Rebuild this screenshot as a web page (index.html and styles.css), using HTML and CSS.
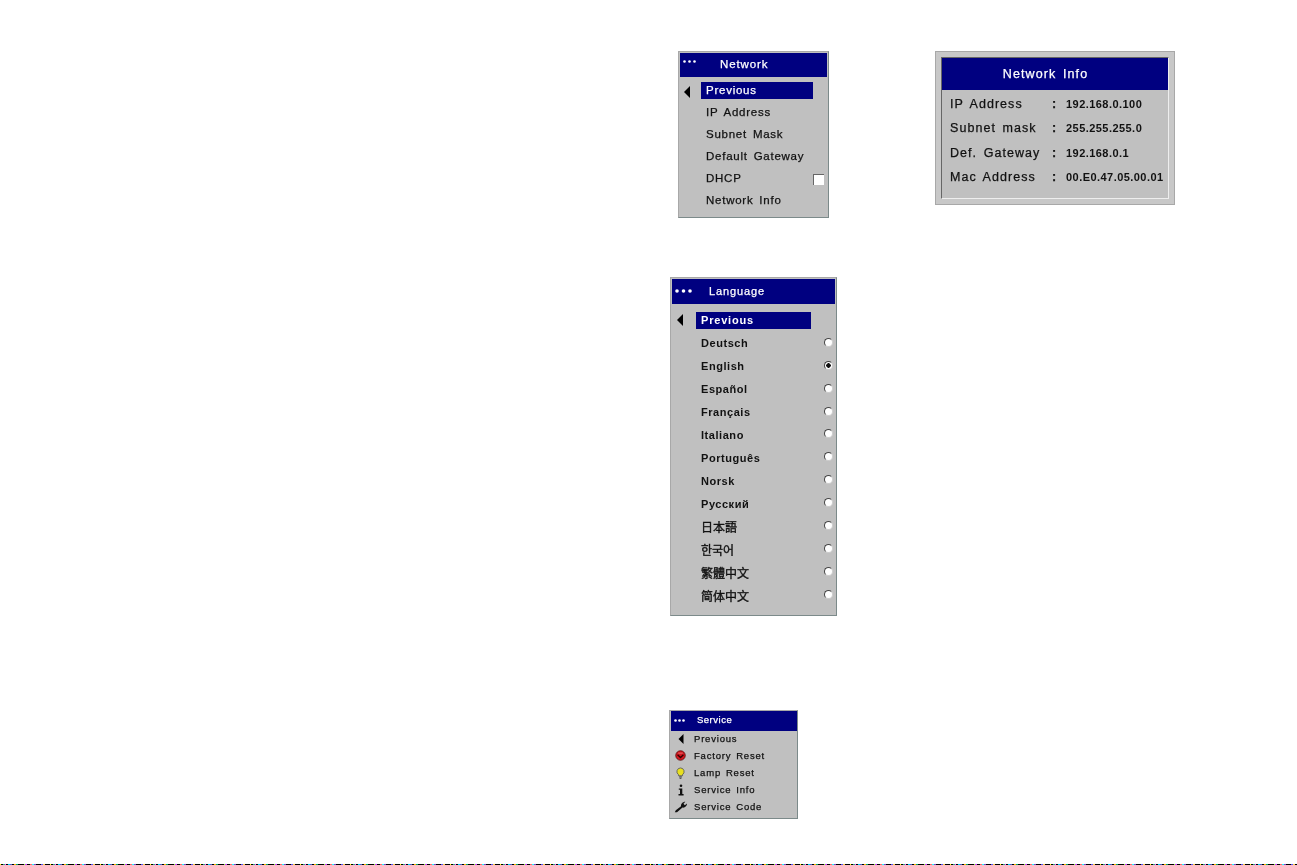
FILE: index.html
```html
<!DOCTYPE html>
<html lang="en">
<head>
<meta charset="utf-8">
<title>Projector menus</title>
<link rel="stylesheet" href="styles.css">
</head>
<body>
<main class="page">
  <section class="osd network">
    <header class="title">
      <svg class="dots" viewBox="0 0 13 3"><circle cx="1.5" cy="1.5" r="1.3"/><circle cx="6.5" cy="1.5" r="1.3"/><circle cx="11.5" cy="1.5" r="1.3"/></svg>
      <span class="title-text">Network</span>
    </header>
    <ul class="menu">
      <li class="row current"><svg class="back" viewBox="0 0 6 12"><path d="M6 0V12L0 6Z"/></svg><span class="label">Previous</span></li>
      <li class="row"><span class="label">IP Address</span></li>
      <li class="row"><span class="label">Subnet Mask</span></li>
      <li class="row"><span class="label">Default Gateway</span></li>
      <li class="row"><span class="label">DHCP</span><i class="check"></i></li>
      <li class="row"><span class="label">Network Info</span></li>
    </ul>
  </section>

  <section class="osd info">
    <div class="info-inner">
      <header class="title">Network Info</header>
      <dl class="info-grid">
        <dt>IP Address</dt><dd class="colon">:</dd><dd class="value">192.168.0.100</dd>
        <dt>Subnet mask</dt><dd class="colon">:</dd><dd class="value">255.255.255.0</dd>
        <dt>Def. Gateway</dt><dd class="colon">:</dd><dd class="value">192.168.0.1</dd>
        <dt>Mac Address</dt><dd class="colon">:</dd><dd class="value">00.E0.47.05.00.01</dd>
      </dl>
    </div>
  </section>

  <section class="osd language">
    <header class="title">
      <svg class="dots" viewBox="0 0 17 4"><circle cx="2" cy="2" r="1.8"/><circle cx="8.5" cy="2" r="1.8"/><circle cx="15" cy="2" r="1.8"/></svg>
      <span class="title-text">Language</span>
    </header>
    <ul class="menu">
      <li class="row current"><svg class="back" viewBox="0 0 6 12"><path d="M6 0V12L0 6Z"/></svg><span class="label">Previous</span></li>
      <li class="row"><span class="label">Deutsch</span><i class="radio"></i></li>
      <li class="row"><span class="label">English</span><i class="radio on"></i></li>
      <li class="row"><span class="label">Español</span><i class="radio"></i></li>
      <li class="row"><span class="label">Français</span><i class="radio"></i></li>
      <li class="row"><span class="label">Italiano</span><i class="radio"></i></li>
      <li class="row"><span class="label">Português</span><i class="radio"></i></li>
      <li class="row"><span class="label">Norsk</span><i class="radio"></i></li>
      <li class="row"><span class="label">Русский</span><i class="radio"></i></li>
      <li class="row"><span class="label cjk" lang="ja">日本語</span><i class="radio"></i></li>
      <li class="row"><span class="label cjk" lang="ko">한국어</span><i class="radio"></i></li>
      <li class="row"><span class="label cjk" lang="zh-Hant">繁體中文</span><i class="radio"></i></li>
      <li class="row"><span class="label cjk" lang="zh-Hans">简体中文</span><i class="radio"></i></li>
    </ul>
  </section>

  <section class="osd service">
    <header class="title">
      <svg class="dots" viewBox="0 0 11 3"><circle cx="1.5" cy="1.5" r="1.3"/><circle cx="5.5" cy="1.5" r="1.3"/><circle cx="9.5" cy="1.5" r="1.3"/></svg>
      <span class="title-text">Service</span>
    </header>
    <ul class="menu">
      <li class="row"><span class="ico"><svg class="back" viewBox="0 0 6 12"><path d="M6 0V12L0 6Z"/></svg></span><span class="label">Previous</span></li>
      <li class="row"><span class="ico"><svg viewBox="0 0 12 12" width="11" height="11"><circle cx="6" cy="6" r="5.200" fill="#d01820" stroke="#500" stroke-width="0.800"/><path d="M2.800 5.200L6 8.200L9.200 5.200" fill="none" stroke="#300" stroke-width="1.500"/><path d="M3.500 3.400H8.500" stroke="#f07070" stroke-width="1"/></svg></span><span class="label">Factory Reset</span></li>
      <li class="row"><span class="ico"><svg viewBox="0 0 12 13" width="11" height="12"><path d="M6 1A4 4 0 0 1 8.200 8.300V9.500H3.800V8.300A4 4 0 0 1 6 1Z" fill="#e8e020" stroke="#555" stroke-width="0.900"/><path d="M4.500 10.800H7.500M5 12.300H7" stroke="#333" stroke-width="1"/></svg></span><span class="label">Lamp Reset</span></li>
      <li class="row"><span class="ico"><svg viewBox="0 0 12 12" width="12" height="12"><circle cx="6" cy="1.800" r="1.300" fill="#111"/><path d="M3.800 4.500H7.300V10H8.600V11.500H3.500V10H5V5.800H3.800Z" fill="#111"/></svg></span><span class="label">Service Info</span></li>
      <li class="row"><span class="ico"><svg viewBox="0 0 14 12" width="14" height="12"><path d="M0.800 11.300L1.800 9.300L7 5.300C6.800 3 8.500 0.800 11.300 0.800L9.500 2.800L10.800 4.300L13 2.600C13.200 5 11 7 8.500 6.600L3 11.300Z" fill="#111"/></svg></span><span class="label">Service Code</span></li>
    </ul>
  </section>

  <div class="noise"></div>
</main>
</body>
</html>
```

FILE: styles.css
```css
* { box-sizing: border-box; }
html, body { margin: 0; padding: 0; background: #fff; }
.page {
  position: relative;
  width: 1297px;
  height: 865px;
  overflow: hidden;
  font-family: "Liberation Sans", "Noto Sans CJK JP", sans-serif;
  color: #111;
}
.osd {
  position: absolute;
  background: #c0c0c0;
  border: 1px solid #7c8a8a;
  border-top-color: #a8a8a8;
  border-left-color: #a8a8a8;
  filter: blur(0.4px);
  -webkit-text-stroke: 0.25px currentColor;
}
ul.menu { list-style: none; margin: 0; padding: 0; }
.title {
  display: flex;
  align-items: center;
  background: #000080;
  color: #fff;
  position: relative;
}
.dots { fill: #fff; display: block; }
.row { display: flex; align-items: center; position: relative; }
.back { fill: #000; display: block; }
.label { display: block; white-space: pre; }

/* Network */
.network { left: 678px; top: 51px; width: 151px; height: 167px; padding: 1px; }
.network .title { height: 24px; padding-bottom: 3px; font-size: 11.500px; letter-spacing: 0.900px; word-spacing: 2px; padding-left: 3px; }
.network .dots { width: 13px; height: 3px; margin-top: -5px; }
.network .title-text { margin-left: 24px; }
.network .menu { padding-top: 3px; }
.network .row { height: 21.900px; padding-left: 4px; font-size: 11.500px; letter-spacing: 0.750px; word-spacing: 2px; }
.network .back { width: 6px; height: 12px; margin-top: 2px; margin-right: 11px; }
.network .label { margin-left: 22px; line-height: 17px; }
.network .current .label { margin-left: 0; padding-left: 5px; width: 112px; background: #000080; color: #fff; }
.check {
  position: absolute; left: 133px; top: 6px; width: 11px; height: 11px;
  background: #fff; border-top: 1px solid #666; border-left: 1px solid #666;
}

/* Network info */
.info { left: 935px; top: 51px; width: 240px; height: 154px; padding: 5px; background: #c8c8c8; border: 1px solid #a8a8a8; }
.info-inner { height: 100%; background: #c0c0c0; border: 1px solid; border-color: #666 #eee #eee #666; }
.info .title { justify-content: center; height: 32px; font-size: 12.500px; letter-spacing: 1.100px; word-spacing: 2px; padding-right: 19px; }
.info-grid {
  display: grid;
  grid-template-columns: 102px 14px 1fr;
  grid-auto-rows: 24.300px;
  align-items: center;
  margin: 2px 0 0; padding-left: 8px;
  font-size: 12.500px; letter-spacing: 1.050px; word-spacing: 2px;
}
.info-grid dd { margin: 0; }
.info-grid .value { font-size: 11px; font-weight: 700; letter-spacing: 0.450px; -webkit-text-stroke: 0; }
.info-grid .colon { font-weight: 700; }

/* Language */
.language { left: 670px; top: 277px; width: 167px; height: 339px; padding: 1px; }
.language .title { height: 25px; padding-bottom: 2px; font-size: 11px; letter-spacing: 0.900px; padding-left: 3px; }
.language .dots { width: 17px; height: 4px; }
.language .title-text { margin-left: 17px; }
.language .menu { padding-top: 5px; }
.language .row { height: 22.900px; padding-left: 5px; font-size: 11px; font-weight: 700; letter-spacing: 0.550px; -webkit-text-stroke: 0; }
.language .row .label { margin-left: 24px; }
.language .current .back { width: 6px; height: 12px; margin-right: 13px; }
.language .row.current .label { margin-left: 0; width: 115px; padding-left: 5px; background: #000080; color: #fff; line-height: 17px; letter-spacing: 0.800px; }
.language .row .cjk { font-size: 12px; font-weight: 400; letter-spacing: 0; -webkit-text-stroke: 0.350px currentColor; }
.radio {
  position: absolute; left: 152px; top: 6px; width: 9px; height: 9px; border-radius: 50%;
  background: #fff; border: 1px solid; border-color: #444 #ccc #ccc #444;
}
.radio.on { background: radial-gradient(circle, #111 0 2px, #fff 2.500px); }

/* Service */
.service { left: 669px; top: 710px; width: 129px; height: 109px; padding: 0 0 0 1px; }
.service .title { height: 20px; padding-bottom: 3px; font-size: 9.500px; letter-spacing: 0.500px; padding-left: 3px; }
.service .dots { width: 11px; height: 3px; margin-top: 1px; }
.service .title-text { margin-left: 12px; }
.service .row { height: 17px; top: -1px; font-size: 9.500px; letter-spacing: 0.800px; word-spacing: 1.500px; }
.service .ico { width: 23px; padding-right: 4px; display: flex; justify-content: center; }
.service .ico .back { width: 6px; height: 10px; }

/* Bottom scan line */
.noise {
  position: absolute; left: 0; top: 864px; width: 1297px; height: 1px;
  background: repeating-linear-gradient(90deg,
    #ff0 0 1px, #000 1px 3px, #3a8 3px 5px, #f4f 5px 6px, #000 6px 8px, #0cf 8px 10px, #46c 10px 12px,
    #000 12px 14px, #fa0 14px 16px, #0a6 16px 18px, #000 18px 24px, #8f4 24px 25px, #c3f 25px 27px, #000 27px 30px,
    #f66 30px 32px, #2ff 32px 34px, #84c 34px 36px, #000 36px 41px, #55f 41px 43px, #fc4 43px 45px, #000 45px 50px);
}
```
